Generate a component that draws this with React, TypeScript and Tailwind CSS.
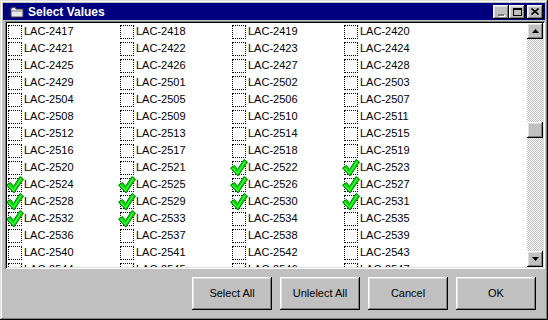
import React from 'react';

const raised =
  'shadow-[inset_-1px_-1px_#000,inset_1px_1px_#fff,inset_-2px_-2px_#808080,inset_2px_2px_#dfdfdf]';

const codes: number[] = [];
for (let n = 2417; n <= 2429; n++) codes.push(n);
for (let n = 2501; n <= 2547; n++) codes.push(n);

const isChecked = (n: number) => n >= 2522 && n <= 2533;

function Check() {
  return (
    <svg className="absolute -left-[3px] -top-[3px]" width="18" height="18" viewBox="0 0 18 18">
      <polygon
        points="0.5,9 4.5,6.5 7.5,10.5 14,0.5 17.5,3 8,17"
        fill="#00e000"
        stroke="#008000"
        strokeWidth="1"
        strokeLinejoin="round"
      />
      <polyline points="2.5,9 7.5,14.5 15,2.5" fill="none" stroke="#60ff60" strokeWidth="1" />
    </svg>
  );
}

function Item({ code }: { code: number }) {
  return (
    <div className="flex items-center h-[17px]">
      <div className="relative ml-[1px] w-[14px] h-[14px] border border-dotted border-black">
        {isChecked(code) && <Check />}
      </div>
      <span className="ml-[2px] text-[11px] leading-none text-black">LAC-{code}</span>
    </div>
  );
}

function TitleButton({ children, className = '' }: { children: React.ReactNode; className?: string }) {
  return (
    <div className={`w-[16px] h-[14px] bg-[#c0c0c0] flex items-center justify-center ${raised} ${className}`}>
      {children}
    </div>
  );
}

function ArrowButton({ up }: { up?: boolean }) {
  return (
    <div className={`w-[16px] h-[16px] bg-[#c0c0c0] flex items-center justify-center ${raised}`}>
      <svg width="7" height="4" viewBox="0 0 7 4">
        <polygon points={up ? '3.5,0 7,4 0,4' : '0,0 7,0 3.5,4'} fill="#000" />
      </svg>
    </div>
  );
}

function DlgButton({ label }: { label: string }) {
  return (
    <button className={`w-[80px] h-[33px] bg-[#c0c0c0] text-[11px] text-black ${raised}`}>{label}</button>
  );
}

export default function App() {
  return (
    <div
      className="w-[548px] h-[320px] bg-[#c0c0c0] p-[3px] flex flex-col shadow-[inset_-1px_-1px_#000,inset_1px_1px_#dfdfdf,inset_-2px_-2px_#808080,inset_2px_2px_#fff]"
      style={{ fontFamily: '"Liberation Sans", Arial, sans-serif' }}
    >
      {/* title bar */}
      <div className="h-[17px] bg-[#000080] flex items-center pl-[7px] pr-[2px]">
        <svg width="14" height="12" viewBox="0 0 14 12">
          <path d="M1 2 L5 1 L6 3 L13 3 L13 11 L1 11 Z" fill="#e8e8e8" stroke="#404040" strokeWidth="1" />
          <path d="M2 5 L12 5" stroke="#808080" strokeWidth="1" />
        </svg>
        <span className="ml-[4px] text-[12px] font-bold text-white leading-none">Select Values</span>
        <div className="ml-auto flex items-center">
          <TitleButton>
            <div className="w-[6px] h-[2px] bg-[#808080] mt-[6px] shadow-[1px_1px_#fff]" />
          </TitleButton>
          <TitleButton>
            <div className="w-[9px] h-[8px] border border-black border-t-2" />
          </TitleButton>
          <TitleButton className="ml-[2px]">
            <svg width="8" height="7" viewBox="0 0 8 7">
              <path d="M0.5 0.5 L7.5 6.5 M7.5 0.5 L0.5 6.5" stroke="#000" strokeWidth="1.6" />
            </svg>
          </TitleButton>
        </div>
      </div>

      {/* list box */}
      <div className="mt-[1px] ml-[2px] h-[248px] bg-white flex shadow-[inset_1px_1px_#808080,inset_-1px_-1px_#fff,inset_2px_2px_#000,inset_-2px_-2px_#dfdfdf] p-[2px]">
        <div className="flex-1 overflow-hidden">
          <div className="grid grid-cols-[112px_112px_112px_112px]">
            {codes.map((c) => (
              <Item key={c} code={c} />
            ))}
          </div>
        </div>
        <div className="w-[16px] flex flex-col">
          <ArrowButton up />
          <div className="flex-1 bg-[conic-gradient(#fff_25%,#c0c0c0_0_50%,#fff_0_75%,#c0c0c0_0)] bg-[length:2px_2px] pt-[83px]">
            <div className={`w-[16px] h-[16px] bg-[#c0c0c0] ${raised}`} />
          </div>
          <ArrowButton />
        </div>
      </div>

      {/* buttons */}
      <div className="mt-[8px] flex justify-end gap-[8px] pr-[9px]">
        <DlgButton label="Select All" />
        <DlgButton label="Unlelect All" />
        <DlgButton label="Cancel" />
        <DlgButton label="OK" />
      </div>
    </div>
  );
}
